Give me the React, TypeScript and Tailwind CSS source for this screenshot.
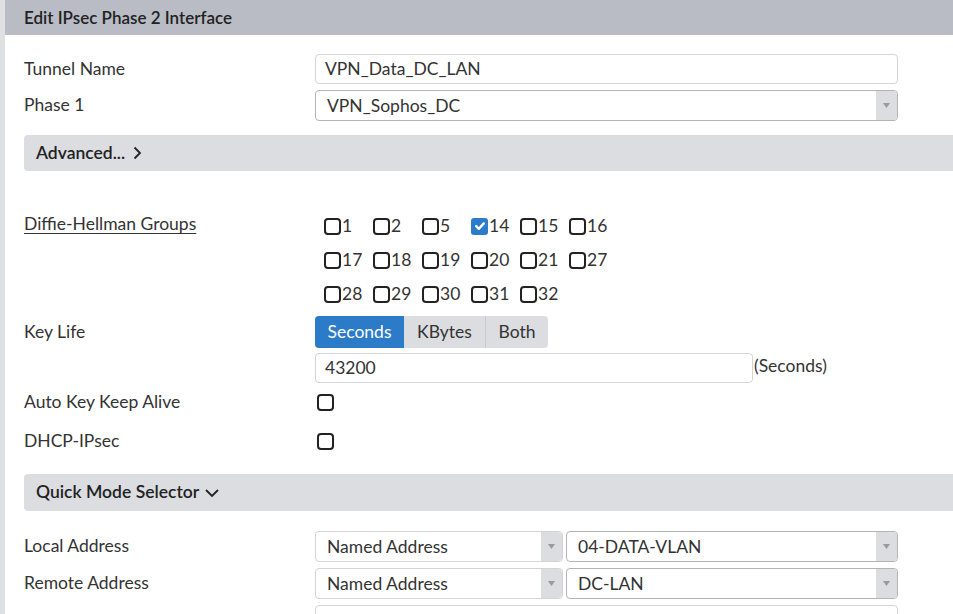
import React from "react";

const font = { fontFamily: "Lato, 'Open Sans', sans-serif" };

function Box({ checked = false }: { checked?: boolean }) {
  if (checked) {
    return (
      <span className="inline-flex w-[17px] h-[17px] rounded-[3px] bg-[#2d7ccb] items-center justify-center shrink-0">
        <svg width="12" height="12" viewBox="0 0 12 12">
          <path d="M2.2 6.2 L4.9 8.8 L9.8 3.4" stroke="#fff" strokeWidth="2.4" fill="none" strokeLinecap="round" strokeLinejoin="round" />
        </svg>
      </span>
    );
  }
  return <span className="inline-block w-[17px] h-[17px] rounded-[4px] border-2 border-[#222] shrink-0" />;
}

function Arrow() {
  return (
    <span className="flex w-[21px] self-stretch bg-[#dcdde1] items-center justify-center rounded-r-[4px]">
      <svg width="7" height="5" viewBox="0 0 7 5">
        <path d="M0 0 L7 0 L3.5 5 Z" fill="#9a9a9a" />
      </svg>
    </span>
  );
}

function Select({ value, className, dark = false }: { value: string; className: string; dark?: boolean }) {
  return (
    <div
      className={`flex h-full items-center rounded-[4px] border ${dark ? "border-[#b4b4b4]" : "border-[#d4d4d4]"} bg-white overflow-hidden ${className}`}
    >
      <span className="flex-1 pl-[11px] text-[17.5px] text-[#333] leading-none">{value}</span>
      <Arrow />
    </div>
  );
}

function Label({ children }: { children: React.ReactNode }) {
  return <div className="w-[291px] shrink-0 text-[17.5px] text-[#333]">{children}</div>;
}

const dh: { n: string; c?: boolean }[][] = [
  [{ n: "1" }, { n: "2" }, { n: "5" }, { n: "14", c: true }, { n: "15" }, { n: "16" }],
  [{ n: "17" }, { n: "18" }, { n: "19" }, { n: "20" }, { n: "21" }, { n: "27" }],
  [{ n: "28" }, { n: "29" }, { n: "30" }, { n: "31" }, { n: "32" }],
];

export default function App() {
  return (
    <div className="flex w-[953px] h-[614px] overflow-hidden bg-white" style={font}>
      <div className="w-[5px] shrink-0 bg-[#dfe0e3]" />
      <div className="flex-1 flex flex-col">
        <div className="h-[35px] shrink-0 bg-[#b9bcc4] flex items-center pl-[19px] text-[17px] font-semibold text-[#222]">
          Edit IPsec Phase 2 Interface
        </div>
        <div className="pl-[19px] flex flex-col">
          <div className="flex items-center h-[30px] mt-[19px]">
            <Label>Tunnel Name</Label>
            <div className="w-[583px] h-full rounded-[4px] border border-[#d4d4d4] flex items-center pl-[9px] text-[17.5px] text-[#333]">
              VPN_Data_DC_LAN
            </div>
          </div>
          <div className="flex items-center h-[31px] mt-[6px]">
            <Label>Phase 1</Label>
            <Select value="VPN_Sophos_DC" className="w-[583px]" dark />
          </div>
          <div className="h-[36px] mt-[14px] bg-[#dcdde1] rounded-l-[4px] flex items-center pl-[12px] text-[17.5px] font-semibold text-[#222] gap-[7px]">
            <span>Advanced...</span>
            <svg width="10" height="16" viewBox="0 0 10 16">
              <path d="M2.5 2.5 L8 8 L2.5 13.5" stroke="#222" strokeWidth="1.8" fill="none" />
            </svg>
          </div>
          <div className="flex mt-[38px]">
            <div className="w-[291px] shrink-0 h-[34px] flex items-center">
              <span className="text-[17.5px] text-[#333] underline underline-offset-[3px] -mt-[4px]">Diffie-Hellman Groups</span>
            </div>
            <div className="flex flex-col pl-[9px]">
              {dh.map((row, i) => (
                <div key={i} className="flex h-[34px] items-center">
                  {row.map((it) => (
                    <div key={it.n} className="w-[49px] flex items-center gap-[1px] text-[17.5px] text-[#333]">
                      <Box checked={it.c} />
                      <span>{it.n}</span>
                    </div>
                  ))}
                </div>
              ))}
            </div>
          </div>
          <div className="flex items-center h-[32px] mt-[5px]">
            <Label>Key Life</Label>
            <div className="flex h-full rounded-[4px] overflow-hidden text-[17.5px]">
              <div className="w-[89px] bg-[#2b7bc9] text-white flex items-center justify-center">Seconds</div>
              <div className="w-[82px] bg-[#dcdde1] text-[#333] flex items-center justify-center border-r border-[#c9cacd]">KBytes</div>
              <div className="w-[62px] bg-[#dcdde1] text-[#333] flex items-center justify-center">Both</div>
            </div>
          </div>
          <div className="flex items-center h-[30px] mt-[5px]">
            <div className="w-[291px] shrink-0" />
            <div className="w-[438px] h-full rounded-[4px] border border-[#d4d4d4] flex items-center pl-[9px] text-[17.5px] text-[#333]">
              43200
            </div>
            <span className="text-[17.5px] text-[#333] ml-[1px] -mt-[4px]">(Seconds)</span>
          </div>
          <div className="flex items-center h-[32px] mt-[5px]">
            <div className="w-[291px] shrink-0 text-[17.5px] text-[#333] -mt-[3px]">Auto Key Keep Alive</div>
            <span className="ml-[2px] mt-[2px]"><Box /></span>
          </div>
          <div className="flex items-center h-[32px] mt-[7px]">
            <div className="w-[291px] shrink-0 text-[17.5px] text-[#333] -mt-[3px]">DHCP-IPsec</div>
            <span className="ml-[2px] mt-[2px]"><Box /></span>
          </div>
          <div className="h-[37px] mt-[15px] bg-[#dcdde1] rounded-l-[4px] flex items-center pl-[12px] text-[17.5px] font-semibold text-[#222] gap-[5px]">
            <span>Quick Mode Selector</span>
            <svg width="16" height="12" viewBox="0 0 16 12">
              <path d="M2 3 L8 9 L14 3" stroke="#222" strokeWidth="1.8" fill="none" />
            </svg>
          </div>
          <div className="flex items-center h-[31px] mt-[20px]">
            <Label>Local Address</Label>
            <Select value="Named Address" className="w-[248px]" />
            <Select value="04-DATA-VLAN" className="w-[332px] ml-[3px]" dark />
          </div>
          <div className="flex items-center h-[31px] mt-[6px]">
            <Label>Remote Address</Label>
            <Select value="Named Address" className="w-[248px]" />
            <Select value="DC-LAN" className="w-[332px] ml-[3px]" dark />
          </div>
          <div className="flex items-start h-[31px] mt-[6px]">
            <div className="w-[291px] shrink-0 text-[17.5px] text-[#333] mt-[4px]">Local Port</div>
            <div className="w-[583px] h-full rounded-[4px] border border-[#d4d4d4] flex items-start pt-[5px] pl-[9px] text-[17.5px] text-[#333]">
              All
            </div>
          </div>
        </div>
      </div>
    </div>
  );
}
